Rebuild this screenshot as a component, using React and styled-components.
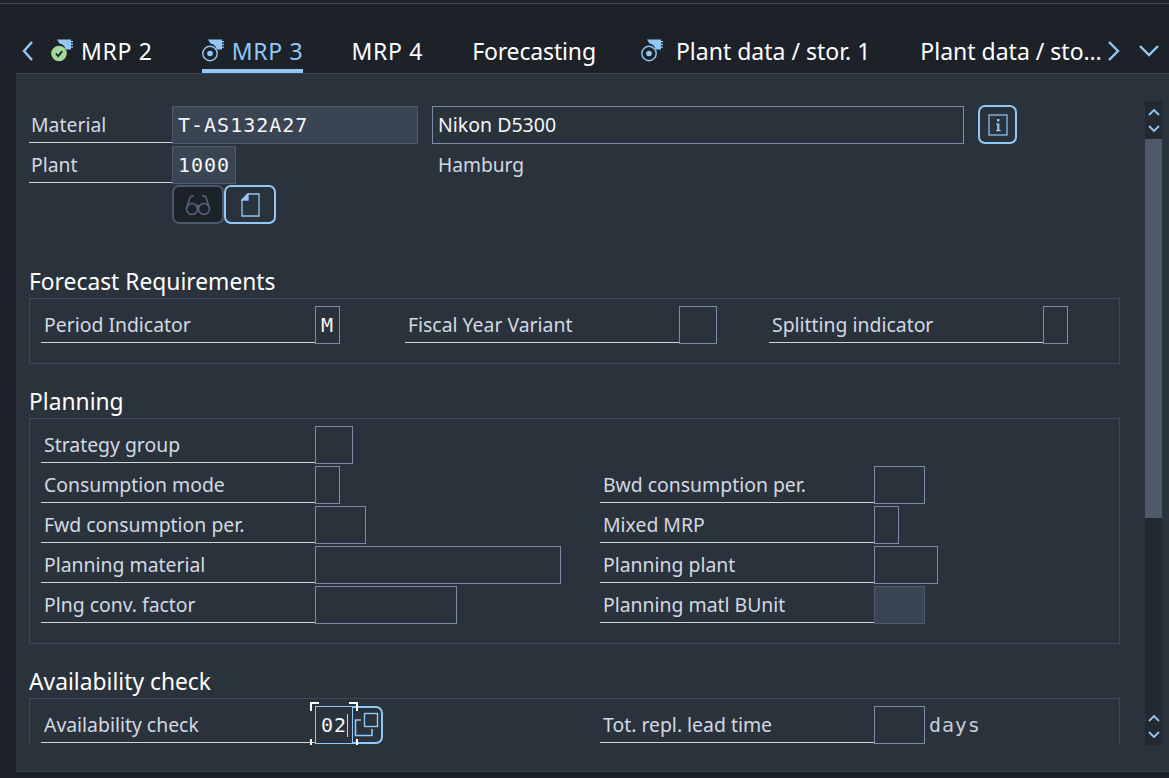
import React from "react";
import styled, { createGlobalStyle } from "styled-components";

const Global = createGlobalStyle`
  html, body { margin: 0; padding: 0; background: #1d2229; }
  * { box-sizing: border-box; }
  #root { width: 1169px; height: 778px; overflow: hidden; }
`;
const BLUE = "#91c8f6";
const SANS = `"Noto Sans", "Open Sans", sans-serif`;
const MONO = `"DejaVu Sans Mono", monospace`;

const Page = styled.div`
  width: 1169px; height: 778px; display: flex; flex-direction: column;
  background: #1d2229; font-family: ${SANS}; color: #d7dde3;
`;
const TopStrip = styled.div`height: 4px; flex: none; background: #1d2229; border-bottom: 1px solid #3b4551;`;
const TabBar = styled.div`
  height: 69px; flex: none; display: flex; align-items: flex-end; padding-left: 21px; position: relative;
`;
const NavBtn = styled.div`
  width: ${p => p.$w}px; height: 44px; flex: none; display: flex; align-items: center; margin: ${p => p.$m || 0};
`;
const Tab = styled.div`
  height: 44px; flex: none; display: flex; align-items: center; gap: ${p => p.$gap ?? 8}px;
  margin-right: ${p => p.$mr ?? 49}px; font-size: 23px; line-height: 32px; white-space: nowrap;
  letter-spacing: ${p => p.$ls ?? 0.15}px;
  color: ${p => (p.$active ? BLUE : "#fff")};
  border-bottom: 4px solid ${p => (p.$active ? BLUE : "transparent")};
  padding-top: 3px;
`;
const TabLabel = styled.span`display: block;`;
const TruncLabel = styled.span`
  display: block; overflow: hidden; text-overflow: ellipsis; max-width: ${p => p.$max}px;
`;
const Panel = styled.div`
  margin-left: 16px; height: 699px; flex: none; background: #2a323c; border-top: 1px solid #3b4551;
  border-bottom: 1px solid #3b4551; display: flex; padding: 27px 7px 26px 0;
`;
const Scroll = styled.div`
  flex: 1; height: 644px; overflow: hidden; padding: 5px 25px 0 13px; min-width: 0;
`;
const Header = styled.div`display: flex; flex-direction: column; gap: 2px; height: 161px;`;
const Row = styled.div`display: flex; align-items: flex-start; height: ${p => p.$h || 38}px;`;
const Label = styled.div`
  width: ${p => p.$w}px; height: 37px; flex: none; padding-left: 3px; font-size: 19.4px; line-height: 38px;
  border-bottom: 1px solid #d0d4d8; color: #d2d9e0; white-space: nowrap;
`;
const HeadLabel = styled(Label)`padding-left: 2px;`;
const Input = styled.div`
  width: ${p => p.$w}px; height: 38px; flex: none; font-family: ${MONO}; font-size: 20px; line-height: 37px;
  letter-spacing: 1px; padding-left: 5px; color: #f4f6f8; white-space: pre;
  background: ${p => (p.$ro ? "#3a4553" : "transparent")};
  border: 1px solid ${p => (p.$ro ? "#4d5b6c" : "#7a8ea5")};
`;
const Desc = styled(Input)`
  font-family: ${SANS}; letter-spacing: 0; font-size: 19.5px; line-height: 35px; margin-left: ${p => p.$ml}px; background: transparent;
`;
const Plain = styled.div`
  font-size: 19.2px; line-height: 38px; margin-left: ${p => p.$ml}px; color: #d2d9e0;
`;
const Btn = styled.div`
  width: ${p => p.$w}px; height: ${p => p.$h || 39}px; flex: none; display: flex; align-items: center; justify-content: center;
  border-radius: 7px; border: 2px solid ${p => (p.$off ? "#4a5a6c" : BLUE)};
  background: ${p => (p.$off ? "#1d2229" : "transparent")};
  margin-left: ${p => p.$ml || 0}px; margin-top: ${p => p.$mt || 0}px;
`;
const ButtonIndent = styled.div`width: 143px; flex: none;`;
const Title = styled.div`
  font-size: 22.8px; line-height: 30px; color: #fff; height: 30px; margin-top: ${p => p.$mt || 0}px; margin-bottom: 1px;
`;
const Group = styled.div`
  border: 1px solid #3f4a57; padding: 7px 11px 0; height: ${p => p.$h}px;
  ${p => p.$open && "border-bottom: none;"}
  display: flex; flex-direction: column; gap: 2px;
`;
const Cols = styled.div`display: flex; height: 38px;`;
const Col = styled.div`display: flex; width: ${p => p.$w}px; flex: none; align-items: flex-start;`;
const Unit = styled.div`
  font-family: ${MONO}; font-size: 20px; letter-spacing: 0.85px; line-height: 39px; margin-left: 4px; color: #c5cdd6;
`;
const FocusWrap = styled.div`position: relative; display: flex; flex: none;`;
const Focused = styled.div`
  width: 38px; height: 38px; border: 1px solid ${BLUE}; font-family: ${MONO}; font-size: 20px; line-height: 37px;
  letter-spacing: 1px; padding-left: 5px; color: #f4f6f8; position: relative;
`;
const Caret = styled.span`position: absolute; left: 31px; top: 7px; width: 1px; height: 23px; background: #d0d4d8;`;
const Corner = styled.span`
  position: absolute; width: 9px; height: 9px; border: 0 solid #fff;
  ${p => (p.$t ? "top: -5px; border-top-width: 2px;" : "bottom: -5px; border-bottom-width: 2px;")}
  ${p => (p.$l ? "left: -6px; border-left-width: 2px;" : "right: -6px; border-right-width: 2px;")}
`;
const HelpBtn = styled.div`
  width: 30px; height: 38px; flex: none; display: flex; align-items: center; justify-content: center;
  border: 2px solid ${BLUE}; border-left: none; border-radius: 0 7px 7px 0;
`;
const Bar = styled.div`
  width: 17px; height: 644px; flex: none; background: #222931; display: flex; flex-direction: column;
`;
const Arrows = styled.div`height: 38px; flex: none; display: flex; flex-direction: column; align-items: center; justify-content: center; gap: 7px;`;
const Thumb = styled.div`height: 379px; flex: none; background: #4d5a6a;`;
const Spacer = styled.div`flex: 1;`;

const Chevron = ({ d, w = 14, h = 24, sw = 2.4, color = BLUE }) => (
  <svg width={w} height={h} viewBox={`0 0 ${w} ${h}`} fill="none">
    <path d={d} stroke={color} strokeWidth={sw} />
  </svg>
);
const STACK = "M6 .5h14v1.6h2v1.2h-2v1.5h2V6h-2v1.5h2v1.2h-2V10.5h-5.5C14 7 11 5 8.5 4.6z";
const WheelIcon = ({ color = BLUE }) => (
  <svg width="22" height="23" viewBox="0 0 22 23" fill="none">
    <path d={STACK} fill={color} />
    <circle cx="8" cy="14.5" r="7.2" stroke={color} strokeWidth="1.4" />
    <circle cx="8" cy="14.5" r="2.8" fill={color} />
  </svg>
);
const CheckIcon = () => (
  <svg width="22" height="23" viewBox="0 0 22 23" fill="none">
    <path d={STACK} fill={BLUE} />
    <circle cx="8" cy="14.5" r="7.8" fill="#a5d99a" />
    <path d="M4.8 14.5l2.4 2.6 4-5" stroke="#1d2229" strokeWidth="1.8" />
  </svg>
);

const F = ({ label, w, ro, v = "" }) => (
  <>
    <Label $w={274}>{label}</Label>
    <Input $w={w} $ro={ro}>{v}</Input>
  </>
);

const ScrollArrows = () => (
  <Arrows>
    <Chevron d="M2 8l5-5 5 5" w={14} h={10} sw={1.8} />
    <Chevron d="M2 2l5 5 5-5" w={14} h={10} sw={1.8} />
  </Arrows>
);

export default function App() {
  return (
    <Page>
      <Global />
      <TopStrip />
      <TabBar>
        <NavBtn $w={30}><Chevron d="M11 3L3 12l8 9" w={13} /></NavBtn>
        <Tab $ls={0.7} $mr={49}><CheckIcon /><TabLabel>MRP 2</TabLabel></Tab>
        <Tab $ls={0.7} $active $mr={48}><WheelIcon /><TabLabel>MRP 3</TabLabel></Tab>
        <Tab $ls={0.7}><TabLabel>MRP 4</TabLabel></Tab>
        <Tab $ls={-0.15} $mr={45}><TabLabel>Forecasting</TabLabel></Tab>
        <Tab $ls={0} $gap={13} $mr={50}><WheelIcon /><TabLabel>Plant data / stor. 1</TabLabel></Tab>
        <Tab $ls={0} $mr={0}><TruncLabel $max={187}>Plant data / stor. 2</TruncLabel></Tab>
        <NavBtn $w={32}><Chevron d="M2 3l9 9-9 9" w={13} /></NavBtn>
        <NavBtn $w={20}><Chevron d="M1 7l9 9 9-9" w={20} /></NavBtn>
      </TabBar>
      <Panel>
        <Scroll>
          <Header>
            <Row>
              <HeadLabel $w={143}>Material</HeadLabel>
              <Input $w={246} $ro>T-AS132A27</Input>
              <Desc $w={532} $ml={14}>Nikon D5300</Desc>
              <Btn $w={39} $ml={14} $mt={-1}>
                <svg width="20" height="22" viewBox="0 0 20 22" fill="none">
                  <rect x="1" y="1" width="18" height="20" stroke={BLUE} strokeWidth="1.2" />
                  <rect x="9" y="5" width="2.4" height="2.4" fill={BLUE} />
                  <path d="M8 9.5h3.4V16h1.2v1.2H8V16h1.2v-5.3H8z" fill={BLUE} />
                </svg>
              </Btn>
            </Row>
            <Row>
              <HeadLabel $w={143}>Plant</HeadLabel>
              <Input $w={64} $ro>1000</Input>
              <Plain $ml={202}>Hamburg</Plain>
            </Row>
            <Row>
              <ButtonIndent />
              <Btn $w={52} $off $mt={-1}>
                <svg width="26" height="22" viewBox="0 0 26 22" fill="none" stroke="#56687c" strokeWidth="1.5">
                  <circle cx="7" cy="15" r="5.5" /><circle cx="19" cy="15" r="5.5" />
                  <path d="M11 12.5c1-1.2 3-1.2 4 0M2 12.5L5 3.5c.6-1.4 2-1.8 4-1.8M24 12.5L21 3.5c-.6-1.4-2-1.8-4-1.8" />
                </svg>
              </Btn>
              <Btn $w={52} $mt={-1}>
                <svg width="19" height="24" viewBox="0 0 19 24" fill="none" stroke={BLUE} strokeWidth="1.3">
                  <path d="M1 7l6-6h11v22H1z" /><path d="M1 7h6V1z" fill={BLUE} />
                </svg>
              </Btn>
            </Row>
          </Header>

          <Title>Forecast Requirements</Title>
          <Group $h={66}>
            <Cols>
              <Col $w={364}><F label="Period Indicator" w={25} v="M" /></Col>
              <Col $w={364}><F label="Fiscal Year Variant" w={38} /></Col>
              <Col $w={340}><F label="Splitting indicator" w={25} /></Col>
            </Cols>
          </Group>

          <Title $mt={23}>Planning</Title>
          <Group $h={226}>
            <Cols><Col $w={559}><F label="Strategy group" w={38} /></Col></Cols>
            <Cols>
              <Col $w={559}><F label="Consumption mode" w={25} /></Col>
              <Col $w={500}><F label="Bwd consumption per." w={51} /></Col>
            </Cols>
            <Cols>
              <Col $w={559}><F label="Fwd consumption per." w={51} /></Col>
              <Col $w={500}><F label="Mixed MRP" w={25} /></Col>
            </Cols>
            <Cols>
              <Col $w={559}><F label="Planning material" w={246} /></Col>
              <Col $w={500}><F label="Planning plant" w={64} /></Col>
            </Cols>
            <Cols>
              <Col $w={559}><F label="Plng conv. factor" w={142} /></Col>
              <Col $w={500}><F label="Planning matl BUnit" w={51} ro /></Col>
            </Cols>
          </Group>

          <Title $mt={23}>Availability check</Title>
          <Group $h={60} $open>
            <Cols>
              <Col $w={559}>
                <Label $w={274}>Availability check</Label>
                <FocusWrap>
                  <Focused>02<Caret />
                    <Corner $t $l /><Corner $t /><Corner $l /><Corner />
                  </Focused>
                  <HelpBtn>
                    <svg width="26" height="26" viewBox="0 0 26 26" fill="none" stroke={BLUE} strokeWidth="1.4">
                      <rect x="10.5" y="1.5" width="13" height="13" />
                      <path d="M7 8H1.5v15.5H18V17" strokeWidth="1.6" />
                    </svg>
                  </HelpBtn>
                </FocusWrap>
              </Col>
              <Col $w={500}>
                <F label="Tot. repl. lead time" w={51} />
                <Unit>days</Unit>
              </Col>
            </Cols>
          </Group>
        </Scroll>
        <Bar>
          <ScrollArrows />
          <Thumb />
          <Spacer />
          <ScrollArrows />
        </Bar>
      </Panel>
    </Page>
  );
}
